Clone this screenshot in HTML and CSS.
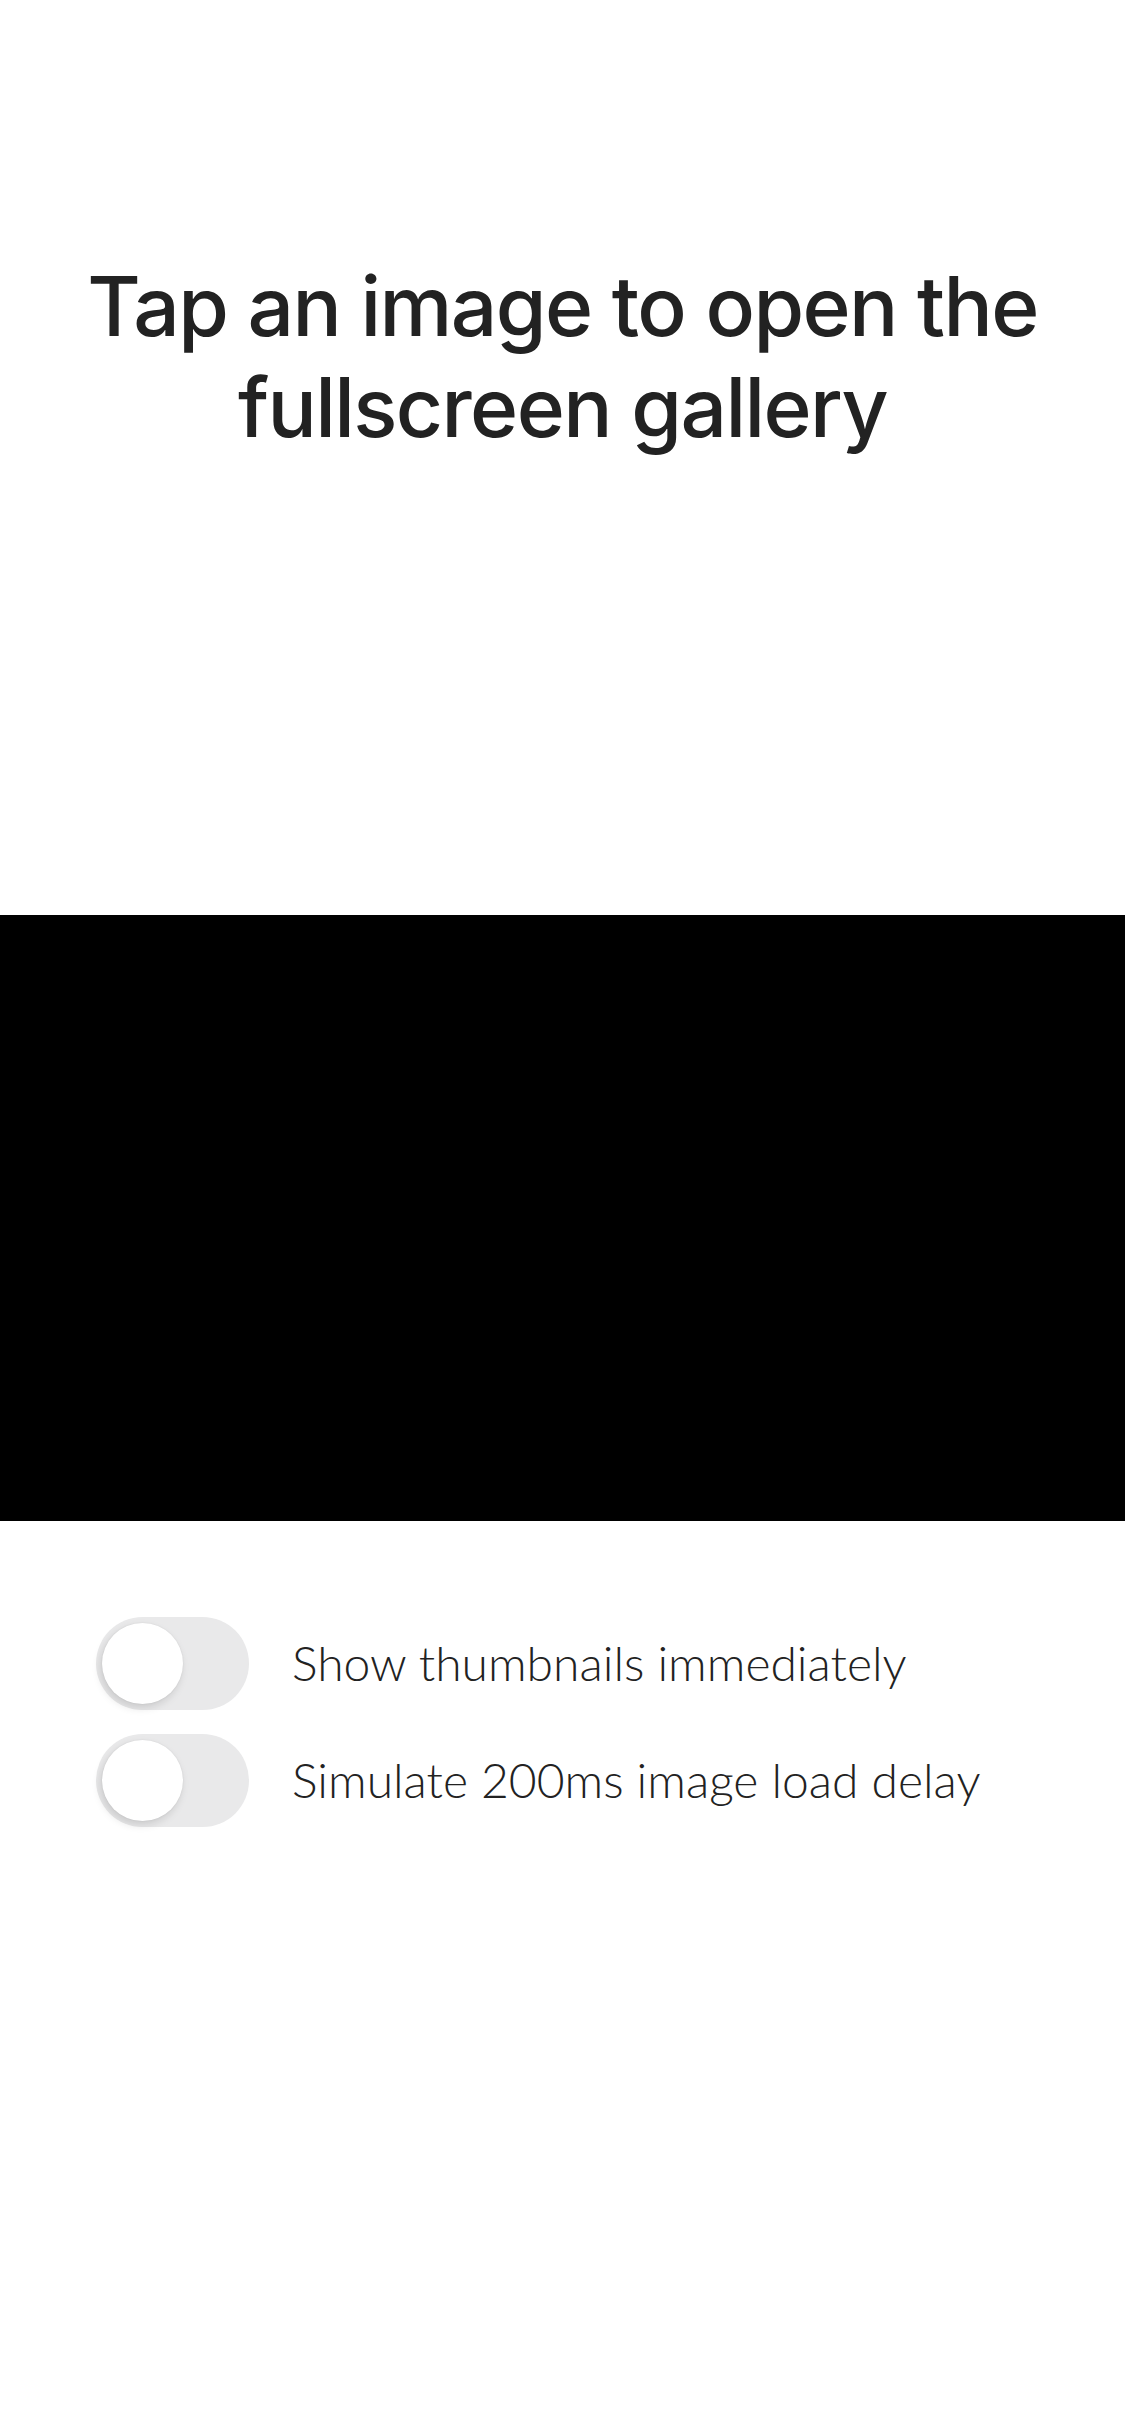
FILE: index.html
```html
<!DOCTYPE html>
<html>
<head>
<meta charset="utf-8">
<link rel="stylesheet" href="styles.css">
</head>
<body>
<div class="page">
  <header class="intro">
    <h1 class="title">Tap an image to open the fullscreen gallery</h1>
  </header>
  <div class="gallery"></div>
  <div class="options">
    <div class="option">
      <div class="switch"><div class="knob"></div></div>
      <span class="label">Show thumbnails immediately</span>
    </div>
    <div class="option">
      <div class="switch"><div class="knob"></div></div>
      <span class="label">Simulate 200ms image load delay</span>
    </div>
  </div>
</div>
</body>
</html>
```

FILE: styles.css
```css
html, body {
  margin: 0;
  padding: 0;
  background: #ffffff;
}
.page {
  width: 1125px;
  min-height: 2436px;
  display: flex;
  flex-direction: column;
  font-family: Inter, "Noto Sans", sans-serif;
  color: #222222;
}
.intro {
  height: 915px;
  box-sizing: border-box;
  padding: 256px 40px 0;
}
.title {
  margin: 0;
  font-size: 82px;
  line-height: 101px;
  font-weight: 500;
  text-align: center;
  letter-spacing: -1.6px;
}
.gallery {
  height: 606px;
  background: #000000;
}
.options {
  display: flex;
  flex-direction: column;
  gap: 24px;
  padding: 96px 0 0 96px;
}
.option {
  display: flex;
  align-items: center;
  gap: 43px;
}
.switch {
  width: 153px;
  height: 93px;
  border-radius: 47px;
  background: #e9e9ea;
  box-sizing: border-box;
  padding: 6px;
  flex-shrink: 0;
}
.knob {
  width: 81px;
  height: 81px;
  border-radius: 50%;
  background: #ffffff;
  box-shadow: -2px 4px 8px rgba(0, 0, 0, 0.13), 0 0 2px rgba(0, 0, 0, 0.08);
}
.label {
  font-family: Lato, "Noto Sans", sans-serif;
  font-size: 48px;
  font-weight: 300;
  color: #222222;
  margin-top: -3px;
}
```
